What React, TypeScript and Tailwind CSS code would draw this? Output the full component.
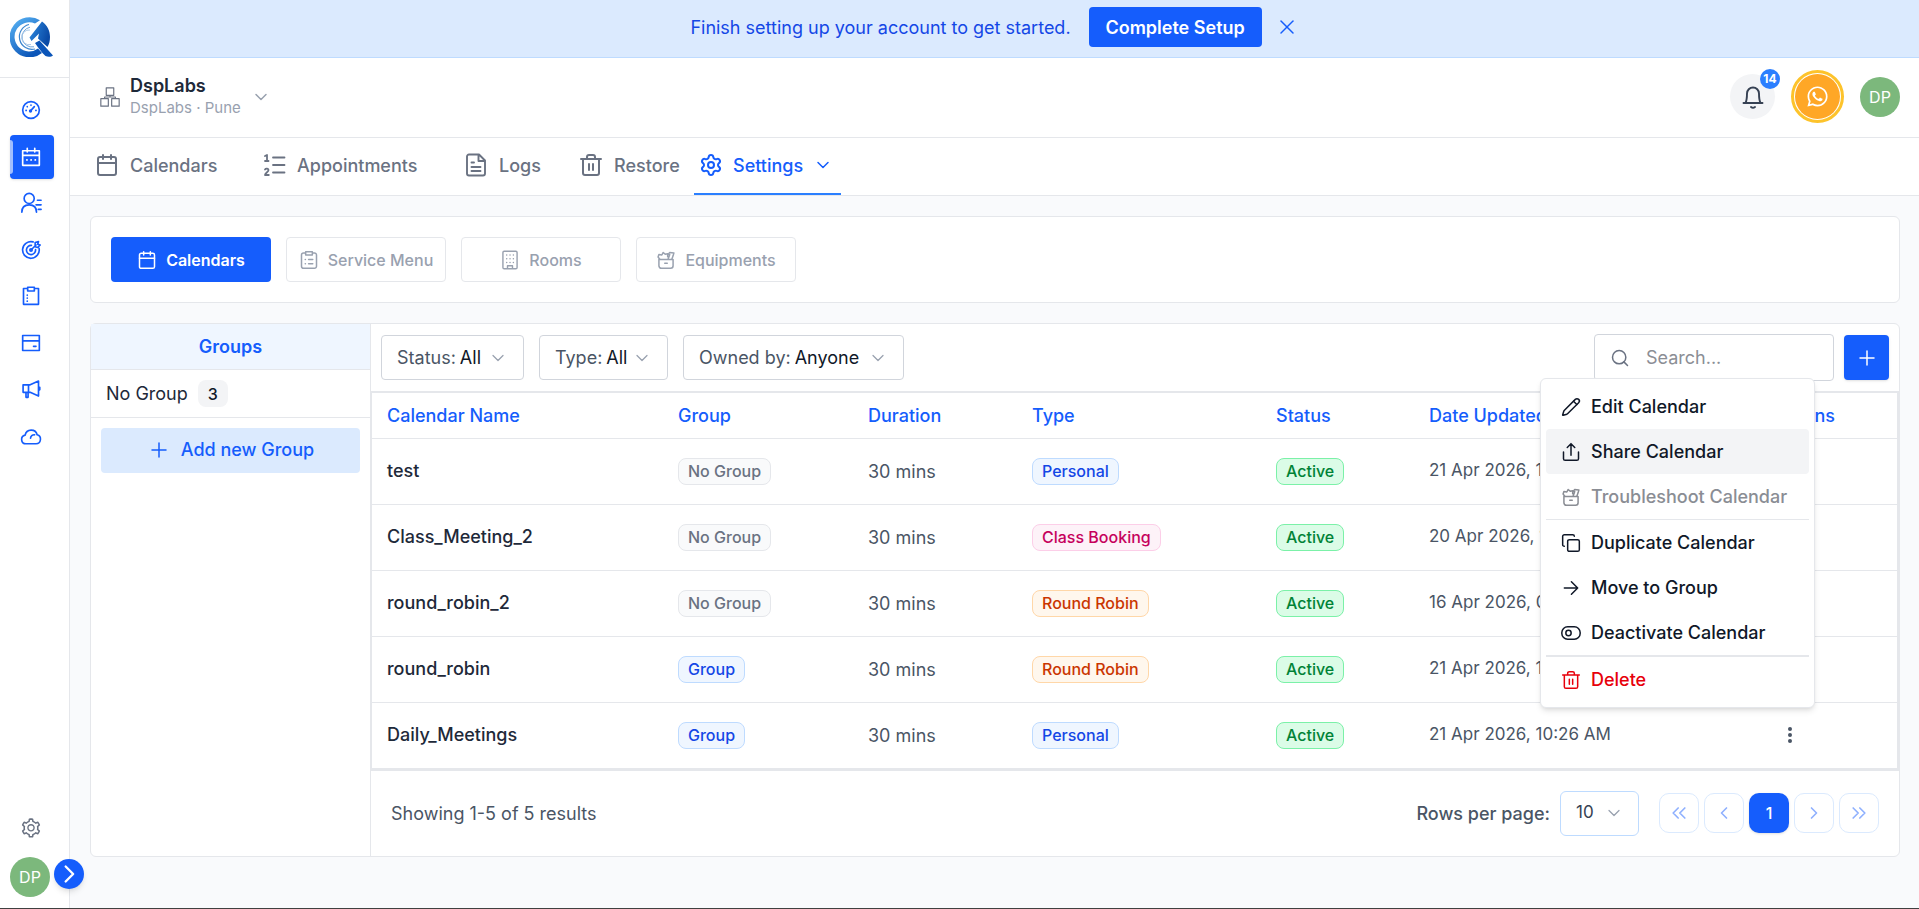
import type { ReactNode } from "react"
import { Calendar, ChevronDown, Copy, Pencil, Plus, Search, Settings, X } from "lucide-react"
import { FaWhatsapp } from "react-icons/fa"
import { AiOutlineSetting } from "react-icons/ai"

interface IconProps {
  className?: string
  width?: number
  children?: ReactNode
}

function Icon({ className = "size-5", width = 2, children }: IconProps) {
  return (
    <svg
      viewBox="0 0 24 24"
      fill="none"
      stroke="currentColor"
      strokeWidth={width}
      strokeLinecap="round"
      strokeLinejoin="round"
      className={`${className} flex-shrink-0`}
      aria-hidden="true"
    >
      {children}
    </svg>
  )
}

function Logo() {
  return (
    <svg viewBox="0 0 44 40" className="h-10 w-11" aria-label="Logo">
      <defs>
        <linearGradient id="ring" x1="0" y1="0" x2="0.6" y2="1">
          <stop offset="0" stopColor="#5db8f7" />
          <stop offset="1" stopColor="#0b55b8" />
        </linearGradient>
        <linearGradient id="arrow" x1="0" y1="0" x2="1" y2="0.4">
          <stop offset="0" stopColor="#2f8be0" />
          <stop offset="1" stopColor="#0a4aa6" />
        </linearGradient>
      </defs>
      <path d="M30 3.2A20 20 0 1 0 32 36l-4-4.5A14.6 14.6 0 1 1 25 6.500Z" fill="url(#ring)" />
      <path d="M19 7.500a12.500 12.500 0 1 0 6 24.500" fill="none" stroke="#3d86cf" strokeWidth="1.200" />
      <path d="M20 10.200a10 10 0 1 0 4 19.600" fill="none" stroke="#6ea5db" strokeWidth="1" />
      <path d="M20 13a7.400 7.400 0 1 0 1 14.500" fill="none" stroke="#a9c8e8" strokeWidth="1" />
      <path d="M19.500 20.500 32 4.500c5.500 4 8 9.500 8 15.500 0 4-.8 7-2.500 10L28 21.500l1-5-7.500 7.500Z" fill="url(#arrow)" />
      <path d="m25 26 4.500-2.500L43 38.500c-1.500 1.500-5 1.800-7.500.6-4-3.600-7-8-10.500-13.100Z" fill="#0b55b8" />
    </svg>
  )
}

function TrashIcon({ className, width }: IconProps) {
  return (
    <Icon className={className} width={width}>
      <path d="M2 6h20M4 6v14a2 2 0 0 0 2 2h12a2 2 0 0 0 2-2V6M8 6V4a2 2 0 0 1 2-2h4a2 2 0 0 1 2 2v2M10 11v6M14 11v6" />
    </Icon>
  )
}

function ToolboxIcon({ className, width = 1.8 }: IconProps) {
  return (
    <Icon className={className} width={width}>
      <path d="M3.500 11.500h17V19a3 3 0 0 1-3 3h-11a3 3 0 0 1-3-3ZM10.500 16h3" />
      <path d="M4.500 11 2.500 8.500 3.500 5.500 7 6l1.500-3 2.500 2 3-.5v3.500M14 6l2.500-3 5 .500L20.500 7l-1.500 4M14.500 11l2-5.500" />
    </Icon>
  )
}

const navIcons = [
  {
    name: "Dashboard",
    icon: (
      <Icon>
        <circle cx="12" cy="12" r="10" />
        <path d="M12 6v.4M7.500 8v.2M6 12.500h.3M17.800 12.500h.3M11.500 13l4.500-5" />
        <circle cx="11.400" cy="13.200" r="1" />
      </Icon>
    ),
  },
  {
    name: "Calendars",
    active: true,
    icon: (
      <Icon>
        <path d="M2 4.500h20V22H2ZM2 10h20M7.500 1.500V6M16.500 1.500V6M7 15.500h.3M12 15.500h.3M17 15.500h.3" />
      </Icon>
    ),
  },
  {
    name: "Contacts",
    icon: (
      <Icon className="size-[22px]" width={1.8}>
        <circle cx="10" cy="7" r="5.500" />
        <path d="M2 22c0-5 3-8 8-8s8 3 8 8M19 9h4M17.500 14H23M20 19h3" />
      </Icon>
    ),
  },
  {
    name: "Opportunities",
    icon: (
      <Icon>
        <path d="M14.500 2.300A10 10 0 1 0 21.700 10M12.500 6.500a5.500 5.500 0 1 0 5 5M12 12l6-6M17 3l4-1-1 3 3 1-3 3-3-1Z" />
        <circle cx="12" cy="12" r="1.400" />
      </Icon>
    ),
  },
  {
    name: "Tasks",
    icon: (
      <Icon>
        <path d="M8 3H3v19h18V3h-5M8 1.500h8V6H8ZM7.500 11v.2M7.500 14.500v.2M7.500 18v.2" />
      </Icon>
    ),
  },
  {
    name: "Payments",
    icon: (
      <Icon>
        <path d="M2 3h20v18H2ZM2 9.500h20M15 16h3" />
      </Icon>
    ),
  },
  {
    name: "Marketing",
    icon: (
      <Icon>
        <path d="M2.500 7H11l10-4.500v18L11 16H2.500ZM9 7v9M6 16v6h2.500v-6M22.500 10v3" />
      </Icon>
    ),
  },
  {
    name: "Cloud",
    icon: (
      <Icon className="size-[22px]" width={1.8}>
        <path d="M6.500 20.500h11a5 5 0 0 0 1.200-9.800A6.700 6.700 0 0 0 5.600 11a4.800 4.800 0 0 0 .9 9.500ZM11.500 14.500c0-2.500 2-4 4.500-3.800" />
      </Icon>
    ),
  },
]

const tabs = [
  { label: "Calendars", width: "w-[167px]", icon: <Calendar className="size-6" strokeWidth={2} /> },
  {
    label: "Appointments",
    width: "w-[202px]",
    icon: (
      <Icon className="size-6" width={1.8}>
        <path d="M11 4.500h11.500M11 12h11.500M11 19.500h11.500M3 3l2-1v6M3 8h3.500M3 16.500c1-1.500 3.500-1 3.500.5C6.500 19 3 20 3 22h3.800" />
      </Icon>
    ),
  },
  {
    label: "Logs",
    width: "w-[115px]",
    icon: (
      <Icon className="size-6" width={1.900}>
        <path d="M15 1.500H5a2 2 0 0 0-2 2v17a2 2 0 0 0 2 2h14a2 2 0 0 0 2-2v-13ZM14.500 1.500V8H21M7.500 9.500H10M7.500 14h9M7.500 18h9" />
      </Icon>
    ),
  },
  { label: "Restore", width: "w-[115px]", icon: <TrashIcon className="size-6" width={2} /> },
]

const sections = [
  {
    label: "Service Menu",
    icon: (
      <Icon width={1.8}>
        <path d="M8 3.500H5.500A2.500 2.500 0 0 0 3 6v13.500A2.500 2.500 0 0 0 5.500 22h13a2.500 2.500 0 0 0 2.500-2.500V6a2.500 2.500 0 0 0-2.500-2.500H16M8 2h8v4H8ZM7.500 11.500h.2M11.500 11.500h5M7.500 16.500h.2M11.500 16.500h5" />
      </Icon>
    ),
  },
  {
    label: "Rooms",
    icon: (
      <Icon width={1.700}>
        <path d="M5 1.500h14a1.500 1.500 0 0 1 1.500 1.500v18a1.500 1.500 0 0 1-1.500 1.500H5A1.500 1.500 0 0 1 3.500 21V3A1.500 1.500 0 0 1 5 1.500ZM9 22.500V19h6v3.500" />
        <path d="M8 6h.1M12 6h.1M16 6h.1M8 10.500h.1M12 10.500h.1M16 10.500h.1M8 15h.1M12 15h.1M16 15h.1" />
      </Icon>
    ),
  },
  { label: "Equipments", icon: <ToolboxIcon /> },
]

const filters = [
  { label: "Status:", value: "All", width: "w-[143px]" },
  { label: "Type:", value: "All", width: "w-[129px]" },
  { label: "Owned by:", value: "Anyone", width: "w-[221px]" },
]

const columns = [
  { label: "Calendar Name", width: "w-[291px]" },
  { label: "Group", width: "w-[190px]" },
  { label: "Duration", width: "w-[164px]" },
  { label: "Type", width: "w-[244px]" },
  { label: "Status", width: "w-[153px]" },
  { label: "Date Updated", width: "w-[341px]" },
  { label: "Actions", width: "w-[143px]" },
]

const rows = [
  { name: "test", group: "No Group", type: "Personal", date: "21 Apr 2026, 10:32 AM" },
  { name: "Class_Meeting_2", group: "No Group", type: "Class Booking", date: "20 Apr 2026, 11:12 AM" },
  { name: "round_robin_2", group: "No Group", type: "Round Robin", date: "16 Apr 2026, 04:45 PM" },
  { name: "round_robin", group: "Group", type: "Round Robin", date: "21 Apr 2026, 11:11 AM" },
  { name: "Daily_Meetings", group: "Group", type: "Personal", date: "21 Apr 2026, 10:26 AM" },
]

const badgeColors: Record<string, string> = {
  "No Group": "border-gray-200 bg-gray-50 text-gray-500",
  Group: "border-blue-200 bg-blue-50 text-blue-700",
  Personal: "border-blue-200 bg-blue-50 text-blue-700",
  "Class Booking": "border-pink-200 bg-pink-50 text-pink-700",
  "Round Robin": "border-orange-200 bg-orange-50 text-orange-700",
  Active: "border-green-300 bg-green-100 text-green-700",
}

function Badge({ label }: { label: string }) {
  return (
    <span
      className={`inline-flex h-[27px] items-center rounded-lg border px-[9px] text-[16px] font-medium ${badgeColors[label]}`}
    >
      {label}
    </span>
  )
}

function Avatar() {
  return (
    <button className="flex size-10 items-center justify-center rounded-full bg-[#7cb87c] text-[16px] text-white">
      DP
    </button>
  )
}

function Sidebar() {
  return (
    <aside className="relative flex w-[70px] flex-shrink-0 flex-col border-r border-gray-200 bg-white">
      <div className="flex h-[78px] items-center border-b border-gray-200 px-[10px] pb-[4px]">
        <Logo />
      </div>

      <nav className="mt-[10px] flex h-[370px] flex-col justify-between px-[10px] text-[#155dfc]">
        {navIcons.map((item) => (
          <a
            key={item.name}
            href="#"
            aria-label={item.name}
            className={
              item.active
                ? "relative flex size-11 items-center justify-center rounded bg-blue-600 pr-[2px] text-white shadow-sm"
                : "flex size-11 items-center justify-center pr-[2px]"
            }
          >
            {item.active && <span className="absolute inset-y-[5px] left-0 w-[3px] rounded-r bg-white/60" />}
            {item.icon}
          </a>
        ))}
      </nav>

      <div className="mt-auto flex flex-col gap-[18px] px-[10px] pb-[11px]">
        <button aria-label="Settings" className="flex w-[42px] justify-center text-gray-500">
          <AiOutlineSetting className="size-[22px]" />
        </button>
        <Avatar />
      </div>

      {/* expand handle */}
      <button
        aria-label="Expand sidebar"
        className="absolute -right-[15px] bottom-[19px] flex size-[30px] items-center justify-center rounded-full bg-blue-600 text-white shadow-md"
      >
        <Icon width={2.800}>
          <path d="m8 3 9 9-9 9" />
        </Icon>
      </button>
    </aside>
  )
}

function Header() {
  return (
    <header className="flex h-20 items-center justify-between border-b border-gray-200 bg-white pr-[19px] pb-[2px] pl-[30px]">
      <button className="flex items-center gap-[10px] text-left">
        <Icon className="size-5 text-gray-500" width={1.400}>
          <path d="M7.500 1h9v9h-9ZM1 14h9v9H1ZM14 14h9v9h-9ZM12 10v2M5.500 14v-2h13v2" />
        </Icon>
        <span className="flex w-[111px] flex-col">
          <span className="text-[18px] leading-[22px] font-semibold text-gray-800">DspLabs</span>
          <span className="text-[15px] leading-[22px] text-gray-400">DspLabs · Pune</span>
        </span>
        <ChevronDown className="size-5 text-gray-400" strokeWidth={1.8} />
      </button>

      <div className="flex items-center">
        <button
          aria-label="Notifications"
          className="relative flex size-[45px] items-center justify-center rounded-full bg-gray-100 text-gray-700"
        >
          <Icon className="size-6" width={1.900}>
            <path d="M2.500 18h19M4.500 18c1.200-2.500 1.500-4.500 1.500-9.500a6 6 0 0 1 12 0c0 5 .3 7 1.500 9.500M10 22c1.300 1 2.700 1 4 0" />
          </Icon>
          <span className="absolute -top-[5px] left-[30px] flex size-5 items-center justify-center rounded-full bg-[#2b7fff] text-[12px] font-bold text-white">
            14
          </span>
        </button>
        <button
          aria-label="WhatsApp"
          className="ml-4 flex size-[53px] items-center justify-center rounded-full border-[3px] border-[#fdc32b] bg-white"
        >
          <span className="flex size-[45px] items-center justify-center rounded-full bg-[#ffa726]">
            <FaWhatsapp className="size-[23px] text-white" />
          </span>
        </button>
        <span className="ml-4">
          <Avatar />
        </span>
      </div>
    </header>
  )
}

function GroupsPanel() {
  return (
    <aside className="w-[280px] flex-shrink-0 border-r border-gray-200">
      <h2 className="flex h-[46px] items-center justify-center border-b border-gray-200 bg-[#eff6ff] text-[18px] font-semibold text-blue-600">
        Groups
      </h2>
      <div className="flex h-12 items-center gap-[10px] border-b border-gray-200 px-[15px] text-[18px] text-gray-800">
        No Group
        <span className="flex h-[27px] w-[30px] items-center justify-center rounded-lg bg-gray-100 text-[16px] font-medium text-gray-900">
          3
        </span>
      </div>
      <div className="p-[10px]">
        <button className="flex h-[45px] w-full items-center justify-center gap-[10px] rounded bg-blue-100 pb-[2px] text-[18px] font-medium text-blue-600">
          <Plus className="size-6" strokeWidth={1.500} />
          Add new Group
        </button>
      </div>
    </aside>
  )
}

function Toolbar() {
  return (
    <div className="flex h-[67px] items-center gap-[10px] px-[10px]">
      <div className="flex flex-1 gap-[15px]">
        {filters.map((f) => (
          <label
            key={f.label}
            className={`${f.width} relative flex h-[45px] items-center rounded border border-gray-300 pl-[15px] text-[18px] text-gray-600`}
          >
            {f.label}
            <select className="ml-1 flex-1 appearance-none bg-transparent text-[18px] text-gray-900 outline-none">
              <option>{f.value}</option>
            </select>
            <ChevronDown className="pointer-events-none absolute right-[15px] size-5 text-gray-400" strokeWidth={1.500} />
          </label>
        ))}
      </div>
      <label className="flex h-[47px] w-60 items-center gap-4 rounded border border-gray-300 px-[15px] text-gray-500">
        <Search className="size-5 flex-shrink-0" strokeWidth={1.800} />
        <input
          type="text"
          aria-label="Search"
          placeholder="Search..."
          className="w-full min-w-0 text-[18px] outline-none placeholder:text-[#8b8e95]"
        />
      </label>
      <button
        aria-label="Add calendar"
        className="flex size-[45px] items-center justify-center rounded bg-[#155dfc] text-white shadow-sm"
      >
        <Plus className="size-6" strokeWidth={1.500} />
      </button>
    </div>
  )
}

function CalendarTable() {
  return (
    <div className="border-t-2 border-r-2 border-b-2 border-l border-gray-200">
      <table className="w-full table-fixed text-left">
        <thead>
          <tr className="h-[45px] border-b border-gray-200">
            {columns.map((col) => (
              <th key={col.label} className={`${col.width} px-[15px] text-[18px] font-medium text-blue-600`}>
                {col.label}
              </th>
            ))}
          </tr>
        </thead>
        <tbody>
          {rows.map((row) => (
            <tr key={row.name} className="h-[66px] border-b border-gray-200 text-[17px] text-gray-600">
              <td className="px-[15px] pb-[2px] text-[18px] font-medium text-gray-800">{row.name}</td>
              <td className="px-[15px]">
                <Badge label={row.group} />
              </td>
              <td className="px-[15px] text-[18px]">30 mins</td>
              <td className="px-[15px]">
                <Badge label={row.type} />
              </td>
              <td className="px-[15px]">
                <Badge label="Active" />
              </td>
              <td className="px-[15px]">{row.date}</td>
              <td className="px-[15px]">
                <button aria-label={`Actions for ${row.name}`} className="flex size-10 items-center justify-center">
                  <svg viewBox="0 0 18 18" className="size-[18px] fill-gray-600">
                    <circle cx="9" cy="3" r="2" />
                    <circle cx="9" cy="9" r="2" />
                    <circle cx="9" cy="15" r="2" />
                  </svg>
                </button>
              </td>
            </tr>
          ))}
        </tbody>
      </table>
    </div>
  )
}

function MenuItem({ icon, label, className = "" }: { icon: ReactNode; label: string; className?: string }) {
  return (
    <button
      role="menuitem"
      className={`flex h-[45px] w-full items-center gap-[10px] rounded pl-[15px] text-[18px] font-medium whitespace-nowrap ${className}`}
    >
      {icon}
      {label}
    </button>
  )
}

function ActionsMenu() {
  return (
    <div
      role="menu"
      className="absolute top-[54px] right-[84px] w-[275px] rounded-md border border-gray-200 bg-white p-[5px] text-gray-900 shadow-md"
    >
      <MenuItem icon={<Pencil className="size-5" strokeWidth={1.800} />} label="Edit Calendar" />
      <MenuItem
        icon={
          <Icon width={1.800}>
            <path d="M12 16V2.500M7.500 6.500 12 2l4.500 4.500M3 12v8a2 2 0 0 0 2 2h14a2 2 0 0 0 2-2v-8" />
          </Icon>
        }
        label="Share Calendar"
        className="bg-gray-100"
      />
      <MenuItem icon={<ToolboxIcon />} label="Troubleshoot Calendar" className="text-[#8a8d94]" />
      <div className="h-px bg-gray-200" />
      <MenuItem icon={<Copy className="size-5" strokeWidth={1.800} />} label="Duplicate Calendar" />
      <MenuItem
        icon={
          <Icon width={1.800}>
            <path d="M4 12h16M12.500 4.500 20 12l-7.500 7.500" />
          </Icon>
        }
        label="Move to Group"
      />
      <MenuItem
        icon={
          <Icon width={1.800}>
            <rect x="1" y="4.500" width="22" height="15" rx="7" />
            <circle cx="9" cy="12" r="3.200" />
          </Icon>
        }
        label="Deactivate Calendar"
      />
      <div className="h-[2px] bg-gray-200" />
      <MenuItem icon={<TrashIcon width={1.800} />} label="Delete" className="text-[#e7000b]" />
    </div>
  )
}

const pageButton = "flex size-10 items-center justify-center rounded-[10px] border border-blue-100 text-[#8fb0fe]"

function Pagination() {
  return (
    <footer className="flex h-[85px] items-center justify-between px-5 text-[18px] text-gray-600">
      <p>Showing 1-5 of 5 results</p>
      <div className="flex items-center">
        <label htmlFor="rows" className="mr-[10px] font-medium">
          Rows per page:
        </label>
        <div className="relative mr-5 flex items-center">
          <select
            id="rows"
            className="h-[45px] w-[79px] appearance-none rounded-md border border-blue-200 pl-[15px] text-[17px] text-gray-700 outline-none"
          >
            <option>10</option>
          </select>
          <ChevronDown className="pointer-events-none absolute right-[15px] size-5 text-gray-400" strokeWidth={1.500} />
        </div>
        <div className="flex gap-[5px]">
          <button aria-label="First page" className={pageButton}>
            <Icon>
              <path d="m11 6-6 6 6 6M19 6l-6 6 6 6" />
            </Icon>
          </button>
          <button aria-label="Previous page" className={pageButton}>
            <Icon>
              <path d="m15 6-6 6 6 6" />
            </Icon>
          </button>
          <button className="flex size-10 items-center justify-center rounded-[10px] bg-[#155dfc] text-[16px] font-medium text-white shadow-sm">
            1
          </button>
          <button aria-label="Next page" className={pageButton}>
            <Icon>
              <path d="m9 6 6 6-6 6" />
            </Icon>
          </button>
          <button aria-label="Last page" className={pageButton}>
            <Icon>
              <path d="m5 6 6 6-6 6M13 6l6 6-6 6" />
            </Icon>
          </button>
        </div>
      </div>
    </footer>
  )
}

export default function App() {
  return (
    <div className="flex min-h-screen border-b border-neutral-700 bg-[#f9fafc] font-['Inter',sans-serif]">
      <Sidebar />

      <div className="min-w-0 flex-1">
        <div className="flex h-[58px] items-center justify-center border-b border-blue-200 bg-blue-100 pb-[3px] text-[18px] text-blue-700">
          Finish setting up your account to get started.
          <button className="ml-[18px] flex h-10 w-[173px] items-center justify-center rounded bg-[#155dfc] text-[18px] font-semibold text-white">
            Complete Setup
          </button>
          <button aria-label="Dismiss" className="ml-[13px] text-blue-600">
            <X className="size-6" strokeWidth={1.500} />
          </button>
        </div>

        <Header />

        <nav className="flex h-[58px] border-b border-gray-200 bg-white pl-[25px] text-[18px] font-medium text-gray-500">
          {tabs.map((tab) => (
            <a key={tab.label} href="#" className={`${tab.width} flex items-center gap-[11px] pb-[3px]`}>
              {tab.icon}
              {tab.label}
            </a>
          ))}
          <a
            href="#"
            className="flex w-[147px] items-center gap-[10px] border-b-2 border-[#2b7fff] pb-[1px] pl-[5px] text-[#155dfc]"
          >
            <Settings className="size-6" strokeWidth={2} />
            Settings
            <ChevronDown className="size-5" strokeWidth={1.800} />
          </a>
        </nav>

        <main className="flex flex-col gap-5 py-5 pr-[19px] pl-5">
          <section className="flex gap-[15px] rounded-md border border-gray-200 bg-white p-5 text-[16px] font-medium">
            <button className="flex h-[45px] w-40 items-center justify-center gap-[9px] rounded bg-[#155dfc] font-semibold text-white">
              <Calendar className="size-5" strokeWidth={1.800} />
              Calendars
            </button>
            {sections.map((s) => (
              <button
                key={s.label}
                className="flex h-[45px] w-40 items-center justify-center gap-[9px] rounded border border-gray-200 text-gray-400"
              >
                {s.icon}
                {s.label}
              </button>
            ))}
          </section>

          <section className="flex rounded-md border border-gray-200 bg-white">
            <GroupsPanel />
            <div className="relative min-w-0 flex-1">
              <Toolbar />
              <CalendarTable />
              <Pagination />
              <ActionsMenu />
            </div>
          </section>
        </main>
      </div>
    </div>
  )
}
